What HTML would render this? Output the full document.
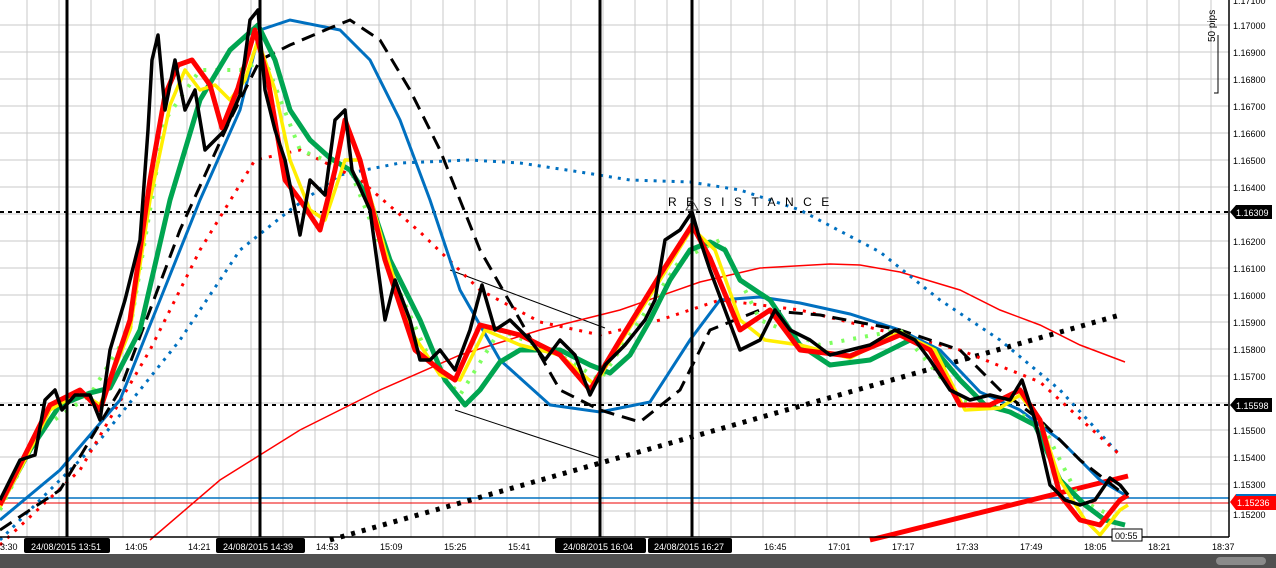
<!DOCTYPE html>
<html><head><meta charset="utf-8"><style>
html,body{margin:0;padding:0;background:#fff;}
body{width:1276px;height:568px;overflow:hidden;position:relative;font-family:"Liberation Sans",sans-serif;}
svg{position:absolute;left:0;top:0;}
</style></head><body>
<svg width="1276" height="568" viewBox="0 0 1276 568" xmlns="http://www.w3.org/2000/svg">
<rect x="0" y="0" width="1276" height="568" fill="#fff"/>
<g stroke="#c8c8c8" stroke-width="1">
<path d="M27 0V537M59 0V537M91 0V537M123 0V537M155 0V537M187 0V537M219 0V537M251 0V537M283 0V537M315 0V537M347 0V537M379 0V537M411 0V537M443 0V537M475 0V537M507 0V537M539 0V537M571 0V537M603 0V537M635 0V537M667 0V537M699 0V537M731 0V537M763 0V537M795 0V537M827 0V537M859 0V537M891 0V537M923 0V537M955 0V537M987 0V537M1019 0V537M1051 0V537M1083 0V537M1115 0V537M1147 0V537M1179 0V537M1211 0V537"/>
<path d="M0 25H1229M0 52H1229M0 79H1229M0 106H1229M0 133H1229M0 160H1229M0 187H1229M0 214H1229M0 241H1229M0 268H1229M0 295H1229M0 322H1229M0 349H1229M0 376H1229M0 403H1229M0 430H1229M0 457H1229M0 484H1229M0 511H1229"/>
</g>
<g stroke="#000" stroke-width="2" stroke-dasharray="4,4">
<path d="M0 212H1229M0 405H1229"/>
</g>
<path d="M0 498H1229" stroke="#0070c0" stroke-width="1.5"/>
<path d="M0 503H1229" stroke="#e00" stroke-width="1"/>
<path d="M450 270L605 328M455 410L600 458" stroke="#000" stroke-width="1"/>
<path d="M330 540L1120 315" stroke="#000" stroke-width="5" stroke-dasharray="4,7"/>
<path d="M870 540L1128 476" stroke="#f00" stroke-width="5"/>
<polyline fill="none" stroke="#f00" stroke-width="1.5" points="150,540 220,480 300,430 380,390 460,355 540,330 620,310 700,282 760,268 830,264 860,265 900,272 960,290 1000,310 1040,325 1080,345 1125,362"/>
<polyline fill="none" stroke="#0070c0" stroke-width="3" stroke-dasharray="3,6" points="0,540 100,440 180,340 240,250 290,210 340,175 400,163 470,160 520,163 580,172 630,180 690,182 740,190 800,210 880,252 940,300 1000,340 1060,390 1120,455"/>
<polyline fill="none" stroke="#f00" stroke-width="3" stroke-dasharray="3,7" points="0,545 80,470 150,350 200,250 255,160 300,150 360,180 420,232 480,290 540,322 600,335 660,320 720,300 800,310 880,330 960,350 1040,382 1120,455"/>
<polyline fill="none" stroke="#0070c0" stroke-width="3" points="0,520 60,470 120,400 160,300 200,200 240,110 260,30 290,20 340,30 370,60 400,120 430,200 460,290 500,360 550,405 600,412 650,402 690,340 720,300 760,297 800,303 850,314 900,330 940,350 980,392 1020,410 1060,440 1100,480 1125,495"/>
<polyline fill="none" stroke="#000" stroke-width="3" stroke-dasharray="14,8" points="0,530 60,490 120,390 180,230 230,120 260,60 290,45 330,28 350,20 380,40 410,90 440,150 480,250 520,320 560,390 600,410 640,422 680,390 710,330 760,310 820,315 900,330 960,350 1000,390 1040,420 1080,460 1125,495"/>
<polyline fill="none" stroke="#7fff60" stroke-width="4" stroke-dasharray="3,9" points="0,510 40,430 90,395 130,330 165,120 200,70 240,70 265,60 300,150 350,170 390,270 430,360 460,395 500,330 560,355 600,380 640,320 680,260 720,240 760,320 820,345 900,330 960,400 1040,420 1080,500 1120,520"/>
<polyline fill="none" stroke="#00a550" stroke-width="5" stroke-linejoin="round" points="0,505 30,450 60,405 90,393 110,388 140,330 170,200 200,100 230,50 258,25 275,60 290,110 310,140 330,158 350,170 370,200 390,260 420,320 445,380 465,405 480,390 500,362 520,350 560,350 590,365 610,373 630,355 650,320 670,280 690,250 710,242 725,250 740,280 770,300 800,345 830,365 870,360 910,340 935,350 960,380 985,405 1010,412 1035,425 1060,480 1085,505 1105,520 1125,525"/>
<polyline fill="none" stroke="#ffee00" stroke-width="3.5" stroke-linejoin="round" points="0,507 25,460 50,410 80,392 100,405 130,330 150,200 170,105 185,70 200,90 215,85 230,100 245,80 258,40 275,90 290,160 310,210 325,220 345,160 360,160 385,250 410,330 440,375 460,380 485,330 520,345 560,355 595,385 625,335 660,280 692,228 715,250 740,320 765,340 800,345 850,358 900,332 935,350 965,410 1000,408 1020,395 1040,420 1060,480 1085,520 1100,535 1120,510 1128,505"/>
<polyline fill="none" stroke="#f00" stroke-width="5" stroke-linejoin="round" points="0,505 25,455 50,405 80,390 100,410 130,320 150,180 165,95 178,65 192,60 210,85 222,128 238,88 255,30 268,80 285,180 300,200 320,230 335,170 345,120 360,160 385,260 415,350 440,370 455,380 480,325 520,335 560,355 590,390 620,340 660,275 692,225 710,258 740,330 770,310 800,350 850,356 900,335 930,350 960,405 990,405 1020,390 1040,420 1060,495 1080,520 1100,525 1120,500 1128,495"/>
<polyline fill="none" stroke="#000" stroke-width="3.5" stroke-linejoin="round" points="0,500 10,480 20,460 35,455 45,400 55,390 62,410 75,395 90,395 100,420 110,350 125,300 140,240 148,130 152,60 158,35 165,110 175,60 185,110 195,90 205,150 215,140 225,130 240,95 250,20 258,10 265,90 275,130 285,160 300,235 310,180 325,195 335,120 345,110 352,170 370,210 385,320 395,280 410,320 420,360 430,360 440,350 455,370 470,330 482,285 495,330 510,320 530,340 545,360 560,340 575,355 590,395 605,365 625,345 645,320 655,300 665,240 680,230 692,212 700,240 710,270 725,310 740,350 760,340 775,310 790,330 810,340 830,355 850,350 870,345 895,330 915,340 930,360 950,390 970,400 990,395 1010,400 1022,380 1035,420 1050,485 1065,500 1080,505 1095,500 1110,478 1120,485 1128,495"/>
<path d="M67 0V537M260 0V537M600 0V537M692 0V537" stroke="#000" stroke-width="3"/>
<path d="M686 210L692 200L698 210Z" fill="none" stroke="#444" stroke-width="1"/>
<text x="668" y="206" font-size="12" letter-spacing="9.5" fill="#000">RESISTANCE</text>
<path d="M0 537H1229M1229 0V537" stroke="#000" stroke-width="1.5"/>
<path d="M1218 35V93H1214" stroke="#000" stroke-width="1" fill="none"/>
<text transform="translate(1215,42) rotate(-90)" font-size="10" fill="#000">50 pips</text>
<g font-size="9" fill="#000">
<text x="1233" y="4">1.17100</text>
<text x="1233" y="29">1.17000</text>
<text x="1233" y="56">1.16900</text>
<text x="1233" y="83">1.16800</text>
<text x="1233" y="110">1.16700</text>
<text x="1233" y="137">1.16600</text>
<text x="1233" y="164">1.16500</text>
<text x="1233" y="191">1.16400</text>
<text x="1233" y="245">1.16200</text>
<text x="1233" y="272">1.16100</text>
<text x="1233" y="299">1.16000</text>
<text x="1233" y="326">1.15900</text>
<text x="1233" y="353">1.15800</text>
<text x="1233" y="380">1.15700</text>
<text x="1233" y="434">1.15500</text>
<text x="1233" y="461">1.15400</text>
<text x="1233" y="488">1.15300</text>
<text x="1233" y="518">1.15200</text>
</g>
<path d="M1230 212L1236 205H1272V219H1236Z" fill="#000"/>
<text x="1236" y="216" font-size="9" fill="#fff">1.16309</text>
<path d="M1230 405L1236 398H1272V412H1236Z" fill="#000"/>
<text x="1236" y="409" font-size="9" fill="#fff">1.15598</text>
<path d="M1230 502L1236 494H1276V510H1236Z" fill="#f00"/>
<rect x="1236" y="494" width="40" height="2" fill="#0070c0"/>
<text x="1237" y="506" font-size="9" fill="#fff">1.15236</text>
<rect x="1112" y="529" width="30" height="12" fill="#fff" stroke="#000"/>
<text x="1115" y="539" font-size="9" fill="#000">00:55</text>
<g font-size="9" fill="#000">
<text x="0" y="550">3:30</text>
<text x="125" y="550">14:05</text>
<text x="188" y="550">14:21</text>
<text x="316" y="550">14:53</text>
<text x="380" y="550">15:09</text>
<text x="444" y="550">15:25</text>
<text x="508" y="550">15:41</text>
<text x="764" y="550">16:45</text>
<text x="828" y="550">17:01</text>
<text x="892" y="550">17:17</text>
<text x="956" y="550">17:33</text>
<text x="1020" y="550">17:49</text>
<text x="1084" y="550">18:05</text>
<text x="1148" y="550">18:21</text>
<text x="1212" y="550">18:37</text>
</g>
<g fill="#000"><rect x="24" y="538" width="86" height="15" rx="2"/><rect x="216" y="538" width="89" height="15" rx="2"/><rect x="555" y="538" width="91" height="15" rx="2"/><rect x="648" y="538" width="84" height="15" rx="2"/></g>
<g font-size="9" fill="#fff">
<text x="31" y="550">24/08/2015 13:51</text>
<text x="223" y="550">24/08/2015 14:39</text>
<text x="563" y="550">24/08/2015 16:04</text>
<text x="654" y="550">24/08/2015 16:27</text>
</g>
<rect x="0" y="554" width="1276" height="14" fill="#505050"/>
<rect x="1216" y="557" width="50" height="8" rx="4" fill="#8a8a8a"/>
</svg>
</body></html>
